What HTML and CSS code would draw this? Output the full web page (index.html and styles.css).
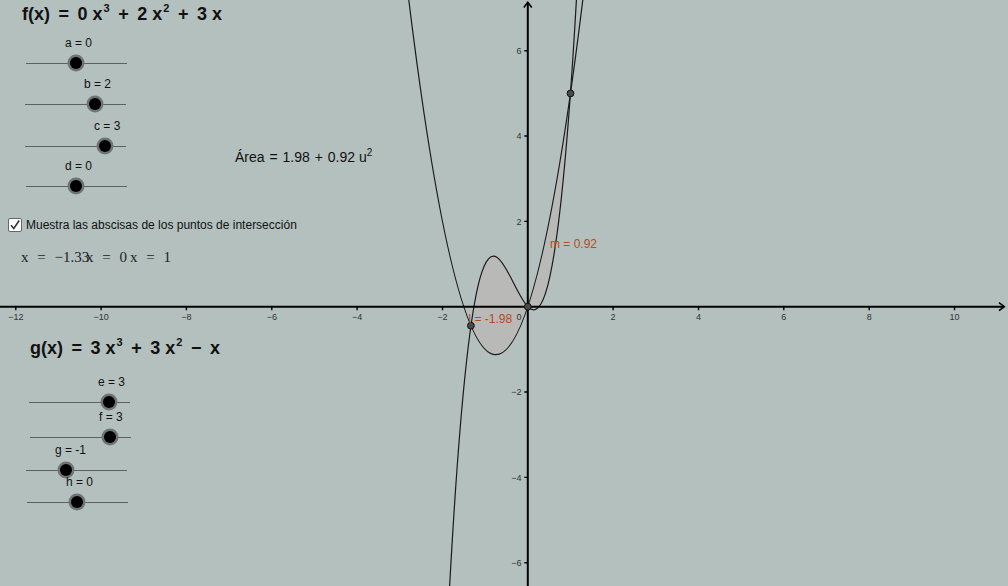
FILE: index.html
```html
<!DOCTYPE html>
<html lang="es">
<head>
<meta charset="utf-8">
<title>Área entre curvas</title>
<link rel="stylesheet" href="styles.css">
</head>
<body>
<div class="applet">
  <svg class="graph" width="1008" height="586" viewBox="0 0 1008 586" xmlns="http://www.w3.org/2000/svg">
    <g transform="matrix(42.67 0 0 -42.67 527.8 306.7)">
      <path class="region" d="M -1.33333 -0.44444 C -0.55556 5 0.22222 -5.88889 1 5 Q -0.16667 -3.16667 -1.33333 -0.44444 Z"/>
      <path class="curve" d="M -2.8 7.28 Q -0.75 -9.53 1.3 7.28"/>
      <path class="curve" d="M -1.9 -7.847 C -0.88 12.6448 0.14 -10.8723 1.16 7.5595"/>
    </g>
    <g class="axes">
      <line x1="0" y1="306.7" x2="1004" y2="306.7"/>
      <line x1="527.8" y1="586" x2="527.8" y2="2.5"/>
      <polyline class="arrow" points="999,302.7 1004.3,306.7 999,310.7"/>
      <polyline class="arrow" points="523.8,7.5 527.8,2.3 531.8,7.5"/>
    </g>
    <g class="ticks">
      <path d="M15.8 306.7v3.5M101.1 306.7v3.5M186.4 306.7v3.5M271.8 306.7v3.5M357.1 306.7v3.5M442.5 306.7v3.5M613.1 306.7v3.5M698.5 306.7v3.5M783.8 306.7v3.5M869.2 306.7v3.5M954.5 306.7v3.5"/>
      <path d="M527.8 50.7h-3.5M527.8 136h-3.5M527.8 221.4h-3.5M527.8 392h-3.5M527.8 477.4h-3.5M527.8 562.7h-3.5"/>
    </g>
    <g class="xlabels">
      <text x="15.8" y="320">−12</text>
      <text x="101.1" y="320">−10</text>
      <text x="186.4" y="320">−8</text>
      <text x="271.8" y="320">−6</text>
      <text x="357.1" y="320">−4</text>
      <text x="442.5" y="320">−2</text>
      <text x="613.1" y="320">2</text>
      <text x="698.5" y="320">4</text>
      <text x="783.8" y="320">6</text>
      <text x="869.2" y="320">8</text>
      <text x="954.5" y="320">10</text>
    </g>
    <g class="ylabels">
      <text x="521.5" y="54">6</text>
      <text x="521.5" y="139.3">4</text>
      <text x="521.5" y="224.7">2</text>
      <text x="521.5" y="320">0</text>
      <text x="521.5" y="395.3">−2</text>
      <text x="521.5" y="480.7">−4</text>
      <text x="521.5" y="566">−6</text>
    </g>
    <g class="pts">
      <circle cx="527.8" cy="306.7" r="3.4"/>
      <circle cx="570.5" cy="93.4" r="3.4"/>
      <circle cx="470.9" cy="325.7" r="3.4"/>
    </g>
    <g class="plabels">
      <text x="550" y="248.3">m = 0.92</text>
      <text x="468.5" y="323.3">l = -1.98</text>
    </g>
  </svg>

  <div class="formula fx">f(x) <span class="op">=</span> 0 x<sup>3</sup> <span class="op">+</span> 2 x<sup>2</sup> <span class="op">+</span> 3 x</div>
  <div class="formula gx">g(x) <span class="op">=</span> 3 x<sup>3</sup> <span class="op">+</span> 3 x<sup>2</sup> <span class="op">−</span> x</div>

  <div class="slider s-a" style="--k:50px"><span class="slabel">a = 0</span><span class="knob"></span></div>
  <div class="slider s-b" style="--k:70px"><span class="slabel">b = 2</span><span class="knob"></span></div>
  <div class="slider s-c" style="--k:80px"><span class="slabel">c = 3</span><span class="knob"></span></div>
  <div class="slider s-d" style="--k:50px"><span class="slabel">d = 0</span><span class="knob"></span></div>
  <div class="slider s-e" style="--k:80px"><span class="slabel">e = 3</span><span class="knob"></span></div>
  <div class="slider s-f" style="--k:80px"><span class="slabel">f = 3</span><span class="knob"></span></div>
  <div class="slider s-g" style="--k:40px"><span class="slabel">g = -1</span><span class="knob"></span></div>
  <div class="slider s-h" style="--k:50px"><span class="slabel">h = 0</span><span class="knob"></span></div>

  <div class="area">Área <span class="op2">=</span> 1.98 <span class="op2">+</span> 0.92 u<sup>2</sup></div>

  <label class="check">
    <span class="box"><svg width="12" height="12" viewBox="0 0 12 12"><path d="M2 6.2 L4.8 9.5 L10.2 1.5" /></svg></span>
    <span class="ctext">Muestra las abscisas de los puntos de intersección</span>
  </label>

  <div class="xval xv1">x <span class="eq">=</span> −1.33</div>
  <div class="xval xv2">x <span class="eq">=</span> 0</div>
  <div class="xval xv3">x <span class="eq">=</span> 1</div>
</div>
</body>
</html>
```

FILE: styles.css
```css
html, body {
  margin: 0;
  padding: 0;
}
body {
  width: 1008px;
  height: 586px;
  overflow: hidden;
  background: #b3c0be;
  font-family: "Liberation Sans", Arial, sans-serif;
}
.applet {
  position: relative;
  width: 1008px;
  height: 586px;
  background: #b3c0be;
  overflow: hidden;
}
.graph {
  position: absolute;
  left: 0;
  top: 0;
  display: block;
}
.region {
  fill: #b9b9b7;
  stroke: none;
}
.curve {
  fill: none;
  stroke: #1a1a1a;
  stroke-width: 1.2px;
  vector-effect: non-scaling-stroke;
}
.axes line {
  stroke: #000;
  stroke-width: 2px;
}
.axes .arrow {
  fill: none;
  stroke: #000;
  stroke-width: 1.6px;
}
.ticks path {
  stroke: #000;
  stroke-width: 1.4px;
  fill: none;
}
.xlabels text, .ylabels text {
  font-family: "Liberation Sans", Arial, sans-serif;
  font-size: 9px;
  fill: #333;
}
.xlabels text {
  text-anchor: middle;
}
.ylabels text {
  text-anchor: end;
}
.pts circle {
  fill: #4a4a4a;
  stroke: #111;
  stroke-width: 1px;
}
.plabels text {
  font-family: "Liberation Sans", Arial, sans-serif;
  font-size: 12px;
  fill: #b44c1b;
}

.formula {
  position: absolute;
  font-family: "Liberation Sans", Arial, sans-serif;
  font-weight: bold;
  font-size: 18px;
  color: #111;
  white-space: nowrap;
  line-height: 20px;
}
.formula sup {
  font-size: 11px;
  vertical-align: 0;
  position: relative;
  top: -8px;
  margin-left: 1px;
}
.formula .op {
  margin: 0 3.5px;
}
.fx {
  left: 22px;
  top: 4px;
}
.gx {
  left: 30px;
  top: 338px;
}

.slider {
  position: absolute;
  width: 101px;
  height: 1px;
  background: #5b6160;
}
.s-a { left: 26px; top: 63px; }
.s-b { left: 25px; top: 104px; }
.s-c { left: 25px; top: 146px; }
.s-d { left: 26px; top: 186px; }
.s-e { left: 29px; top: 402px; }
.s-f { left: 30px; top: 437px; }
.s-g { left: 26px; top: 470px; }
.s-h { left: 27px; top: 502px; }
.knob {
  position: absolute;
  left: var(--k);
  top: 0;
  width: 12px;
  height: 12px;
  margin: -6px 0 0 -6px;
  border-radius: 50%;
  background: #000;
  box-shadow: 0 0 0 2.5px #6d7473;
}
.slabel {
  position: absolute;
  left: calc(var(--k) - 11px);
  top: -26px;
  font-size: 12px;
  line-height: 13px;
  color: #111;
  white-space: nowrap;
}

.area {
  position: absolute;
  left: 235px;
  top: 148px;
  font-family: "Liberation Sans", Arial, sans-serif;
  font-size: 14px;
  line-height: 18px;
  color: #111;
  white-space: nowrap;
}
.area .op2 {
  margin: 0 1px;
}
.area sup {
  font-size: 10px;
  vertical-align: 0;
  position: relative;
  top: -6px;
}

.check {
  position: absolute;
  left: 8px;
  top: 218px;
  display: flex;
  align-items: center;
  gap: 4px;
}
.box {
  width: 12px;
  height: 12px;
  border: 1px solid #666;
  border-radius: 2px;
  background: #fff;
  display: flex;
  align-items: center;
  justify-content: center;
}
.box svg path {
  fill: none;
  stroke: #333;
  stroke-width: 1.6px;
}
.ctext {
  font-size: 12px;
  color: #111;
  line-height: 14px;
}

.xval {
  position: absolute;
  top: 248px;
  font-family: "Liberation Serif", "Times New Roman", serif;
  font-size: 15px;
  line-height: 18px;
  color: #222;
  white-space: nowrap;
}
.xval .eq {
  margin: 0 5px;
}
.xv1 { left: 21px; }
.xv2 { left: 86px; }
.xv3 { left: 130px; }
```
